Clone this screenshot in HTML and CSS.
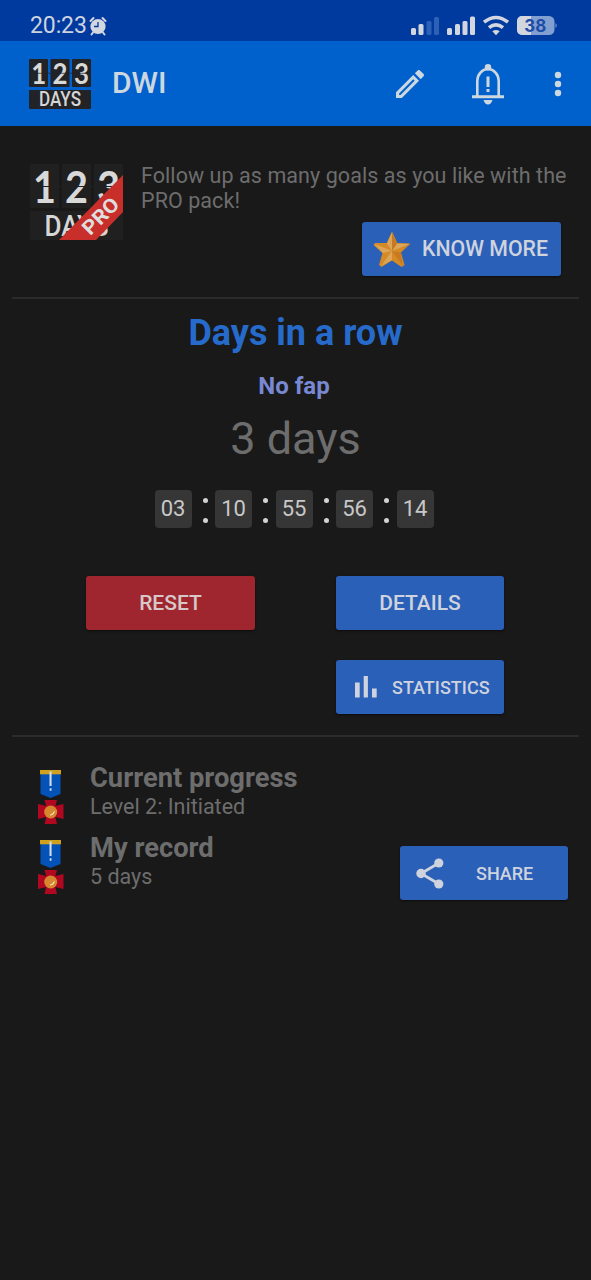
FILE: index.html
```html
<!DOCTYPE html>
<html lang="en">
<head>
<meta charset="utf-8">
<title>DWI</title>
<link rel="stylesheet" href="styles.css">
</head>
<body>
<svg width="0" height="0" class="defs">
  <defs>
    <g id="medal">
      <path d="M1.5 1H21.500V24L11.500 28 1.500 24Z" fill="#0352b8"/>
      <rect x="1" y="0" width="21" height="4.300" fill="#d0a11d"/>
      <path d="M10.500 1.500h2.100V16h-2.100zM10.700 18.200h1.800v2.500h-1.800z" fill="#d5dce5"/>
      <path d="M5.500 30H18L16.300 36 24.500 34V49L16.300 47 18 54H5.500L7.200 47-1 49V34L7.200 36Z" fill="#b20720"/>
      <circle cx="11.700" cy="42" r="6.500" fill="#d6862f"/>
      <path d="M15.300 41.500a4 4 0 0 1-4 3.500Q14.500 44.500 15.300 41.500Z" fill="#f0dfb0" stroke="#f0dfb0"/>
    </g>
  </defs>
</svg>

<header>
  <div class="status">
    <span class="time">20:23</span>
    <svg class="alarm" width="18" height="20" viewBox="0 0 18 20" fill="#d4d7df">
      <circle cx="9" cy="10.500" r="7.600"/>
      <path d="M1.500 5 4.500 2M16.500 5 13.500 2M4 16.500 2.500 18.500M14 16.500 15.500 18.500" stroke="#d4d7df" stroke-width="2" stroke-linecap="round"/>
      <path d="M9 6V10.500H5" fill="none" stroke="#033c9c" stroke-width="1.300"/>
    </svg>
    <svg class="indicators" width="148" height="24" viewBox="0 0 148 24" fill="#d2d6df">
      <rect x="1" y="16" width="5" height="7" rx="1.500"/>
      <rect x="8.500" y="12" width="5" height="11" rx="1.500"/>
      <g fill="#2d61b6"><rect x="16.500" y="9" width="5" height="14" rx="1.500"/><rect x="24" y="5" width="5" height="18" rx="1.500"/></g>
      <rect x="37" y="16" width="5" height="7" rx="1.500"/>
      <rect x="45" y="12" width="5" height="11" rx="1.500"/>
      <rect x="52.500" y="9" width="5" height="14" rx="1.500"/>
      <rect x="60" y="4.500" width="5" height="18.500" rx="1.500"/>
      <g fill="none" stroke="#d2d6df" stroke-width="3.600">
        <path d="M74 10.200Q86 .800 98 10.200"/><path d="M79 15.700Q86 10 93 15.700"/>
      </g>
      <path d="M82.300 19.200Q86 16.700 89.700 19.200L86 23.300Z"/>
      <path d="M112 4h27a5.500 5.500 0 0 1 5.500 5.500v8a5.500 5.500 0 0 1-5.500 5.500h-27a5 5 0 0 1-5-5V9a5 5 0 0 1 5-5Z" fill="#819fd1"/>
      <path d="M112 4h9v19h-9a5 5 0 0 1-5-5V9a5 5 0 0 1 5-5Z"/>
      <path d="M145.500 11q2.500 2.500 0 5Z" fill="#819fd1"/>
      <text x="125.300" y="20" class="charge" textLength="22" lengthAdjust="spacingAndGlyphs">38</text>
    </svg>
  </div>
  <div class="appbar">
    <svg class="logo" width="62" height="51" viewBox="0 0 62 51">
      <g fill="#212326"><rect width="19" height="28" rx="1"/><rect x="21.500" width="19" height="28" rx="1"/><rect x="43" width="19" height="28" rx="1"/><rect y="31" width="62" height="19" rx="1"/></g>
      <g class="digits small"><text x="9.800" y="25" textLength="15" lengthAdjust="spacingAndGlyphs">1</text><text x="31" y="25" textLength="15" lengthAdjust="spacingAndGlyphs">2</text><text x="52.500" y="25" textLength="15" lengthAdjust="spacingAndGlyphs">3</text></g>
      <path d="M0 14.300H62" stroke="#212326" stroke-width=".700"/>
      <text class="days small-days" x="31" y="47" textLength="42" lengthAdjust="spacingAndGlyphs">DAYS</text>
    </svg>
    <h1>DWI</h1>
    <svg class="edit" width="28" height="28" viewBox="3 3 18 18" fill="#cdd7df">
      <path d="M14.060 9.020l.92.920L5.920 19H5v-.920l9.060-9.060M17.660 3c-.250 0-.510.100-.700.290l-1.830 1.830 3.750 3.750 1.830-1.830c.390-.390.390-1.020 0-1.410l-2.340-2.340c-.200-.200-.450-.290-.710-.290zm-3.600 3.190L3 17.250V21h3.750L17.810 9.940l-3.750-3.750z"/>
    </svg>
    <svg class="bell" width="32" height="41" viewBox="0 0 32 41" fill="#cdd7df">
      <circle cx="16" cy="3.200" r="3.200"/>
      <path d="M5.300 33V17a10.700 12 0 0 1 21.400 0V33" fill="none" stroke="#cdd7df" stroke-width="2.600"/>
      <path d="M0 31.200H32V34.200H0ZM11.500 36h9q-1.500 4.500-4.500 4.500T11.500 36ZM14.500 12.500h3V23h-3zM14.500 25h3v3h-3z"/>
    </svg>
    <svg class="more" width="8" height="26" viewBox="0 0 8 26" fill="#cdd7df"><circle cx="4" cy="4" r="3.200"/><circle cx="4" cy="13" r="3.200"/><circle cx="4" cy="22" r="3.200"/></svg>
  </div>
</header>

<main>
  <section class="promo">
    <svg class="pro-logo" width="93" height="76" viewBox="0 0 93 76">
      <g fill="#202020"><rect width="29" height="44" rx="1"/><rect x="32" width="29" height="44" rx="1"/><rect x="64" width="29" height="44" rx="1"/><rect y="47" width="93" height="29" rx="1"/></g>
      <g class="digits large"><text x="14.500" y="38.500" textLength="23" lengthAdjust="spacingAndGlyphs">1</text><text x="46.500" y="38.500" textLength="23" lengthAdjust="spacingAndGlyphs">2</text><text x="78.500" y="38.500" textLength="23" lengthAdjust="spacingAndGlyphs">3</text></g>
      <path d="M0 22.500H93" stroke="#202020" stroke-width="1"/>
      <text class="days large-days" x="46.500" y="72" textLength="64" lengthAdjust="spacingAndGlyphs">DAYS</text>
      <path d="M93 11V48L66 76H29Z" fill="#c82f2b"/>
      <text class="ribbon" transform="translate(70.500 52) rotate(-45)" textLength="43" lengthAdjust="spacingAndGlyphs">PRO</text>
    </svg>
    <div class="pitch">
      <p>Follow up as many goals as you like with the<br>PRO pack!</p>
      <button class="know">
        <svg width="38" height="37" viewBox="0 0 38 37">
          <path d="M19 1.500 24 12.500 36.500 13 27.500 21.500 31 34 28.500 35.500 19 29 8.500 35.500 6.500 34 10 22 1 14 2 12.500 14 12.500Z" fill="#d58a25" stroke="#d58a25" stroke-linejoin="round"/>
          <path d="M19 1.500V20L14 12.500ZM1.500 13 19 20 10 22ZM19 20V29L8 35ZM19 20 36.500 13 24 12.500Z" fill="#dba65a"/>
          <path d="M19 20 27.500 21.500 30 35ZM19 1.500 24 12.500 19 20Z" fill="#c97920"/>
        </svg>
        <span>KNOW MORE</span>
      </button>
    </div>
  </section>

  <section class="counter">
    <h2>Days in a row</h2>
    <h3>No fap</h3>
    <p class="total">3 days</p>
    <div class="clock">
      <span class="cell">03</span><i class="colon"></i><span class="cell">10</span><i class="colon"></i><span class="cell">55</span><i class="colon"></i><span class="cell">56</span><i class="colon"></i><span class="cell">14</span>
    </div>
    <div class="actions">
      <button class="reset"><span>RESET</span></button>
      <button class="details"><span>DETAILS</span></button>
      <button class="stats">
        <svg width="22" height="22" viewBox="0 0 22 22" fill="#ced3de"><path d="M0 6.500h4.700V21.500H0zM8.700 0h4.200V21.500H8.700zM17 12.500h4.700v9H17z"/></svg>
        <span>STATISTICS</span>
      </button>
    </div>
  </section>

  <section class="progress">
    <div class="entry">
      <svg width="26" height="55" viewBox="-1 0 26 55"><use href="#medal"/></svg>
      <div><h4 class="current">Current progress</h4><p class="level">Level 2: Initiated</p></div>
    </div>
    <div class="entry">
      <svg width="26" height="55" viewBox="-1 0 26 55"><use href="#medal"/></svg>
      <div><h4 class="record">My record</h4><p class="best">5 days</p></div>
      <button class="share">
        <svg width="28" height="31" viewBox="0 0 28 31" fill="#ced3de"><path d="M23 5 5 15.500 23 26" fill="none" stroke="#ced3de" stroke-width="2.800"/><circle cx="22.800" cy="5" r="4.600"/><circle cx="5" cy="15.500" r="4.700"/><circle cx="22.800" cy="26" r="4.600"/></svg>
        <span>SHARE</span>
      </button>
    </div>
  </section>
</main>
</body>
</html>
```

FILE: styles.css
```css
* { box-sizing: border-box; margin: 0; padding: 0; }
body { width: 591px; height: 1280px; overflow: hidden; background: #191919; font-family: Roboto, sans-serif; color: #6d6d6d; }
svg { display: block; flex: none; overflow: visible; }
.defs { position: absolute; }
button { display: flex; align-items: center; height: 54px; border: 0; border-radius: 3px; background: #2b60b8; color: #ced3de; font: 500 21px Roboto, sans-serif; box-shadow: 0 1px 2px #0d0d0d; white-space: nowrap; }
h1, h2, h3, h4, p, span { white-space: nowrap; }

.status { display: flex; height: 41px; padding: 0 33px 0 30px; background: #013a9f; }
.time { padding-top: 12px; font-size: 23px; line-height: 28px; color: #ccd3df; letter-spacing: -.1px; }
.alarm { margin: 16px 0 0 2px; }
.indicators { margin: 12px 0 0 auto; }
.charge { font: 700 18px Inter, sans-serif; fill: #1d4da6; text-anchor: middle; }

.appbar { display: flex; height: 85px; padding-left: 29px; background: #0061cd; }
.logo { margin-top: 18px; }
.appbar h1 { width: 304.500px; padding: 22px 0 0 21px; font-size: 30px; line-height: 40px; font-weight: 500; color: #cdd7df; }
.edit { margin-top: 28.500px; }
.bell { margin: 23px 0 0 48.500px; }
.more { margin: 30px 0 0 49.500px; }
.digits { font-family: Lato, sans-serif; font-weight: 700; fill: #d8d8d8; text-anchor: middle; }
.small { font-size: 29px; }
.large { font-size: 44px; }
.days { font-family: Roboto, sans-serif; font-weight: 500; fill: #d6d6d6; text-anchor: middle; }
.small-days { font-size: 20px; }
.large-days { font-size: 30px; }
.ribbon { font: 700 20px Roboto, sans-serif; fill: #dedede; text-anchor: middle; dominant-baseline: central; }

.promo { display: flex; height: 173px; margin: 0 12px; padding: 38px 0 0 18px; border-bottom: 2px solid #2b2b2b; }
.pitch { width: 438px; padding-left: 18px; }
.pitch p { margin-top: -1px; font-size: 21.500px; line-height: 25px; letter-spacing: .07px; }
.know { width: 199px; margin: 9px 0 0 auto; padding-left: 11px; }
.know span { margin-left: 11px; padding-bottom: 1px; font-size: 21.300px; }

.counter { height: 438px; margin: 0 12px; padding-top: 13px; border-bottom: 2px solid #2b2b2b; text-align: center; }
.counter h2 { font-size: 36px; line-height: 42px; color: #266bcb; }
.counter h3 { margin: 18px 3px 0 0; font-size: 24px; line-height: 28px; color: #7888d3; }
.total { margin-top: 12px; font-size: 45px; line-height: 54px; }
.clock { display: flex; justify-content: center; margin: 24px 3px 0 0; }
.cell { width: 37px; height: 38px; border-radius: 4px; background: #363636; color: #c8c8c8; font-size: 22px; line-height: 37px; }
.colon { display: flex; flex-direction: column; justify-content: space-between; width: 23.500px; padding: 7.500px 0 5px 11px; }
.colon::before, .colon::after { content: ""; width: 5px; height: 5px; border-radius: 50%; background: #d2d2d2; }
.actions { display: grid; grid-template-columns: 169px 168px; column-gap: 81px; row-gap: 30px; margin: 48px 0 0 74px; }
.actions button { justify-content: center; }
.actions .reset { background: #9f262e; color: #d6c8c8; }
.actions .stats { grid-column: 2; justify-content: flex-start; padding-left: 19px; font-size: 18px; }
.stats span { margin-left: 15px; }

.progress { padding: 25px 23px 0 38px; }
.entry { display: flex; height: 70px; }
.entry > svg { margin-top: 8px; }
.entry > div { padding-left: 26px; }
.entry h4 { font-size: 27.300px; line-height: 32px; }
.entry p { font-size: 21.500px; line-height: 26px; }
.share { width: 168px; margin: 14px 0 0 auto; padding-left: 16px; font-size: 18px; }
.share span { margin-left: 32px; }
```
